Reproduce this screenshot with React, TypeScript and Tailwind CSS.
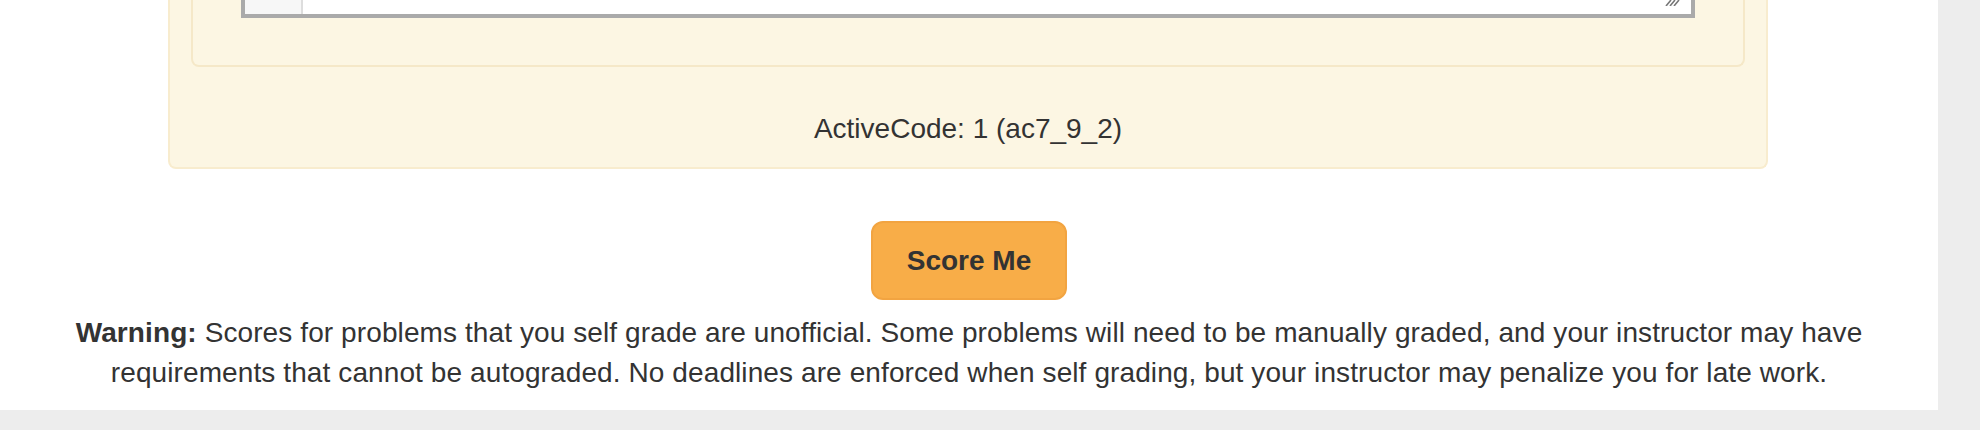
export default function App() {
	return (
		<div className="flex h-[430px] w-full bg-[#ededed] font-['Liberation_Sans',Arial,sans-serif] text-[#333]">
			<main className="flex h-[410px] w-[1938px] flex-col bg-white">
				{/* activecode panel (top cut off) */}
				<section className="ml-[168px] w-[1600px] rounded-b-lg border-x-2 border-b-2 border-[#f8ecce] bg-[#fcf6e3] px-[21px] pb-[18px]">
					<div className="rounded-b-lg border-x-2 border-b-2 border-[#f5e8c8] px-[48px] pb-[47px]">
						<div className="relative flex h-[18px] border-x-4 border-b-4 border-[#aaaaaa] bg-white">
							<div className="w-[58px] border-r-2 border-[#dddddd] bg-[#f7f7f7]"></div>
							<svg
								className="absolute right-[10px] bottom-[8px]"
								width="16"
								height="6"
								viewBox="0 0 16 6"
							>
								<path d="M1 6 L6 0 M5 6 L10 0 M9 6 L14 0" stroke="#777" strokeWidth="1.6" />
							</svg>
						</div>
					</div>
					<p className="mt-[42px] text-center text-[28px] leading-[40px]">ActiveCode: 1 (ac7_9_2)</p>
				</section>

				<div className="mt-[52px] flex justify-center">
					<button className="flex h-[79px] w-[196px] items-center justify-center rounded-[12px] border-2 border-[#f2a441] bg-[#f8ad48] text-[28px] leading-[40px] font-bold text-[#333]">
						Score Me
					</button>
				</div>

				<p className="mt-[13px] px-[30px] text-center text-[28px] leading-[40px] tracking-[0.1px]">
					<b>Warning:</b> Scores for problems that you self grade are unofficial. Some problems will need to be manually graded, and your instructor may have requirements that cannot be autograded. No deadlines are enforced when self grading, but your instructor may penalize you for late work.
				</p>
			</main>
			<div className="flex-1"></div>
		</div>
	);
}
